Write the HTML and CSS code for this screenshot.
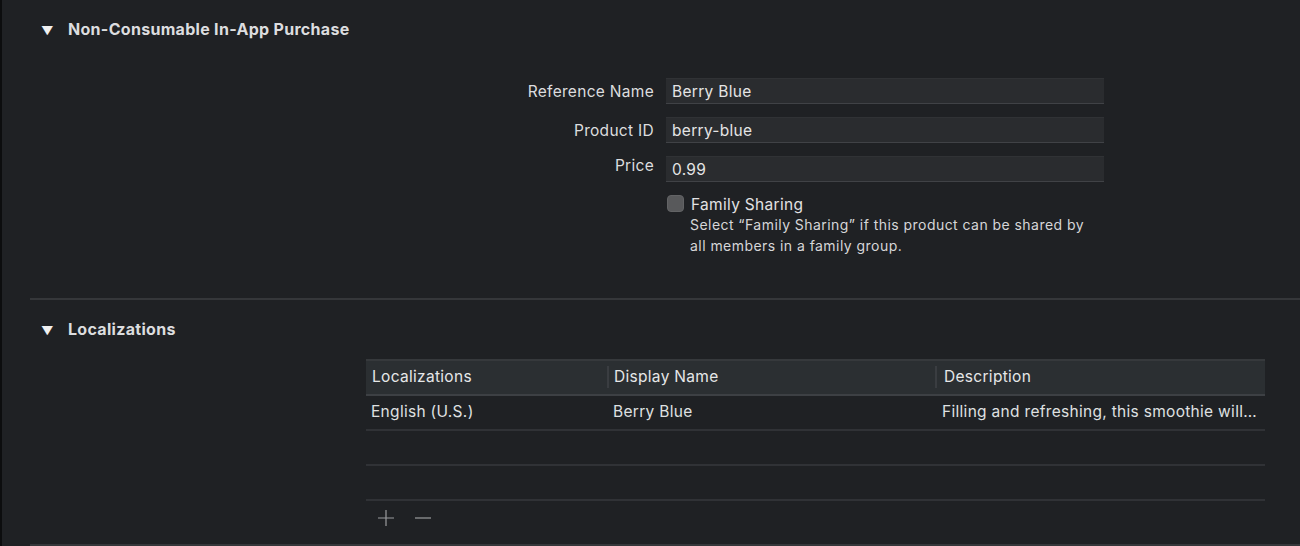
FILE: index.html
```html
<!DOCTYPE html>
<html>
<head>
    <meta charset="utf-8" />
    <title>In-App Purchase</title>
    <link rel="stylesheet" href="styles.css">
</head>
<body>
    <div class="window">
        <section class="section first">
            <div class="section-title"><span class="disclosure">&#9660;</span>Non-Consumable In-App Purchase</div>

            <div class="form">
                <div class="form-row">
                    <label class="form-label">Reference Name</label>
                    <div class="field">Berry Blue</div>
                </div>
                <div class="form-row">
                    <label class="form-label">Product ID</label>
                    <div class="field">berry-blue</div>
                </div>
                <div class="form-row price">
                    <label class="form-label">Price</label>
                    <div class="field">0.99</div>
                </div>
                <div class="form-row check-row">
                    <span class="form-label"></span>
                    <div class="check">
                        <span class="checkbox"></span>
                        <div>
                            <div class="check-title">Family Sharing</div>
                            <div class="check-help">Select “Family Sharing” if this product can be shared by<br>all members in a family group.</div>
                        </div>
                    </div>
                </div>
            </div>
        </section>

        <section class="section second">
            <div class="section-title"><span class="disclosure">&#9660;</span>Localizations</div>

            <div class="table-wrap">
                <div class="table">
                    <div class="row head">
                        <div class="cell c1">Localizations</div>
                        <div class="cell c2">Display Name</div>
                        <div class="cell c3">Description</div>
                    </div>
                    <div class="row">
                        <div class="cell c1">English (U.S.)</div>
                        <div class="cell c2">Berry Blue</div>
                        <div class="cell c3">Filling and refreshing, this smoothie will…</div>
                    </div>
                    <div class="row"></div>
                    <div class="row"></div>
                </div>
                <div class="buttons">
                    <span class="btn">
                        <svg width="18" height="18" viewBox="0 0 18 18"><path d="M9 1v16M1 9h16" stroke="#9a9b9d" stroke-width="1.2" fill="none"/></svg>
                    </span>
                    <span class="btn">
                        <svg width="18" height="18" viewBox="0 0 18 18"><path d="M1 9h16" stroke="#9a9b9d" stroke-width="1.2" fill="none"/></svg>
                    </span>
                </div>
            </div>
        </section>
    </div>
</body>
</html>
```

FILE: styles.css
```css
html, body {
  margin: 0;
  height: 100%;
  background: #1f2124;
  overflow: hidden;
}

body {
  font-family: Inter, "Noto Sans", sans-serif;
  font-size: 15.5px;
  letter-spacing: 0.3px;
  color: #dedfe0;
  border-left: 2px solid #0c0d0e;
  box-sizing: border-box;
}

.window {
  padding-left: 28px;
}

.section {
  border-bottom: 2px solid #35373a;
}

.section.first {
  height: 298px;
}

.section.second {
  height: 244px;
}

.section-title {
  font-weight: 700;
  font-size: 16px;
  color: #dcdddf;
  padding: 18px 0 0 11px;
  height: 22px;
  line-height: 22px;
}

.disclosure {
  display: inline-block;
  font-size: 12px;
  width: 27px;
  letter-spacing: 0;
  color: #f0f0f0;
}

.form {
  margin-top: 38px;
}

.form-row {
  display: flex;
  align-items: center;
  margin-bottom: 13px;
}

.form-row.price {
  margin-bottom: 12px;
}

.form-label {
  width: 624px;
  text-align: right;
  padding-right: 12px;
  color: #dcdddf;
}

.price .form-label {
  align-self: flex-start;
  margin-top: 0;
}

.field {
  width: 432px;
  height: 24px;
  line-height: 26px;
  padding-left: 6px;
  background: #2a2c2f;
  border-top: 1px solid #303235;
  border-bottom: 1px solid #404246;
  color: #e4e4e5;
}

.check-row {
  align-items: flex-start;
}

.check {
  display: flex;
  gap: 7px;
  padding-left: 1px;
}

.checkbox {
  width: 17px;
  height: 17px;
  margin-top: 1px;
  border-radius: 4px;
  background: #58595b;
  border: 1px solid #626365;
  box-sizing: border-box;
}

.check-title {
  line-height: 18px;
  margin-top: 2px;
  color: #e2e2e3;
}

.check-help {
  font-size: 14px;
  letter-spacing: 0.45px;
  line-height: 21px;
  margin-left: -1px;
  color: #d6d6d8;
}

.table-wrap {
  margin: 19px 0 0 336px;
  width: 899px;
}

.table {
  border-top: 2px solid #36393c;
}

.row {
  display: flex;
  height: 33px;
  border-bottom: 2px solid #303236;
  align-items: center;
}

.row.head {
  background: #2b2f32;
  border-bottom-color: #3d4044;
}

.cell {
  padding-left: 5px;
  box-sizing: border-box;
  white-space: nowrap;
  overflow: hidden;
  line-height: 20px;
  margin-top: -1px;
  color: #dfe0e1;
}

.head .cell {
  border-left: 2px solid #3a3d41;
  padding-left: 5px;
  height: 22px;
  line-height: 22px;
  margin-top: -1px;
  color: #e6e7e8;
}

.head .cell.c1 {
  border-left: none;
  padding-left: 6px;
}

.c1 { width: 241px; }
.c2 { width: 328px; }
.c3 { flex: 1; }

.row .c2 { padding-left: 6px; }
.head .c2 { padding-left: 5px; }
.head .c3 { padding-left: 7px; }
.row .c3 { padding-left: 7px; }

.buttons {
  display: flex;
  gap: 19px;
  padding: 8px 0 0 11px;
}

.btn {
  display: inline-flex;
}
```
